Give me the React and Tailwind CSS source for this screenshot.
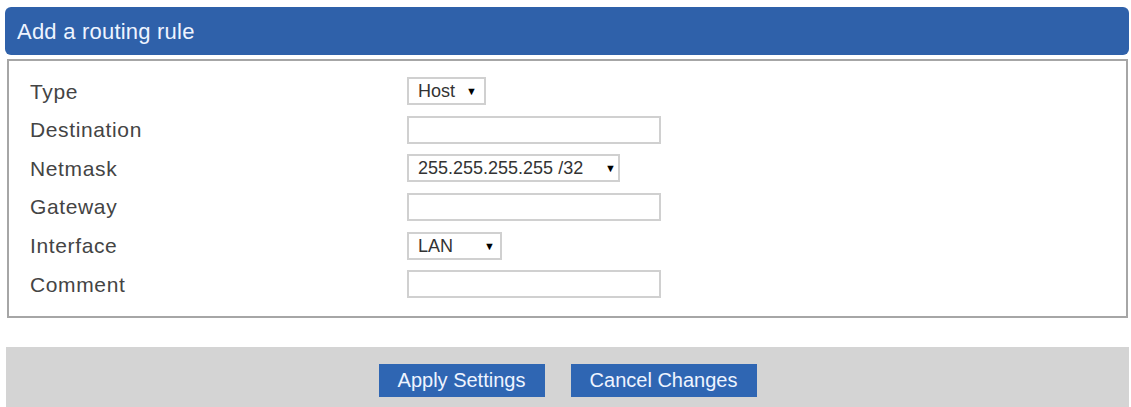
import React from "react";

const rows = [
  { label: "Type", kind: "select", value: "Host", w: "w-[79px]", arrow: "left-[57px]" },
  { label: "Destination", kind: "input" },
  { label: "Netmask", kind: "select", value: "255.255.255.255 /32", w: "w-[213px]", arrow: "left-[196px]" },
  { label: "Gateway", kind: "input" },
  { label: "Interface", kind: "select", value: "LAN", w: "w-[95px]", arrow: "left-[75px]" },
  { label: "Comment", kind: "input" },
];

function FakeSelect({ value, w, arrow }) {
  return (
    <div className={`relative h-[28px] ${w} border-2 border-[#d0d0d0] bg-white text-[18px] leading-[24px] text-[#333] pl-[9px]`}>
      {value}
      <span className={`absolute top-[0px] ${arrow} text-[11px] leading-[24px] text-black`}>▼</span>
    </div>
  );
}

export default function App() {
  return (
    <div className="w-[1131px] h-[407px] bg-white overflow-hidden pt-[7px] pl-[5px] pr-[2px] font-['Liberation_Sans',Arial,sans-serif]">
      {/* Header */}
      <div className="h-[48px] rounded-[6px] bg-[#2f61aa] flex items-center pl-[12px] text-[22px] text-[#eef4ff] tracking-[0.01em]">
        Add a routing rule
      </div>

      {/* Form box */}
      <div className="mt-[4px] ml-[2px] mr-[1px] h-[259px] border-2 border-[#a6a6a6] pt-[11px] pl-[21px]">
        {rows.map((r) => (
          <div key={r.label} className="h-[38.6px] flex items-center">
            <div className="w-[377px] text-[21px] text-[#444] tracking-[0.03em]">{r.label}</div>
            {r.kind === "select" ? (
              <FakeSelect value={r.value} w={r.w} arrow={r.arrow} />
            ) : (
              <input
                type="text"
                className="h-[28px] w-[254px] border-2 border-[#d0d0d0] bg-white outline-none"
              />
            )}
          </div>
        ))}
      </div>

      {/* Button bar */}
      <div className="mt-[29px] ml-[1px] h-[60px] bg-[#d4d4d4] flex items-center justify-center gap-[26px] pt-[6px]">
        <button className="h-[33px] w-[166px] bg-[#2f66b3] text-[20px] text-[#eef4ff]">Apply Settings</button>
        <button className="h-[33px] w-[186px] bg-[#2f66b3] text-[20px] text-[#eef4ff]">Cancel Changes</button>
      </div>
    </div>
  );
}
